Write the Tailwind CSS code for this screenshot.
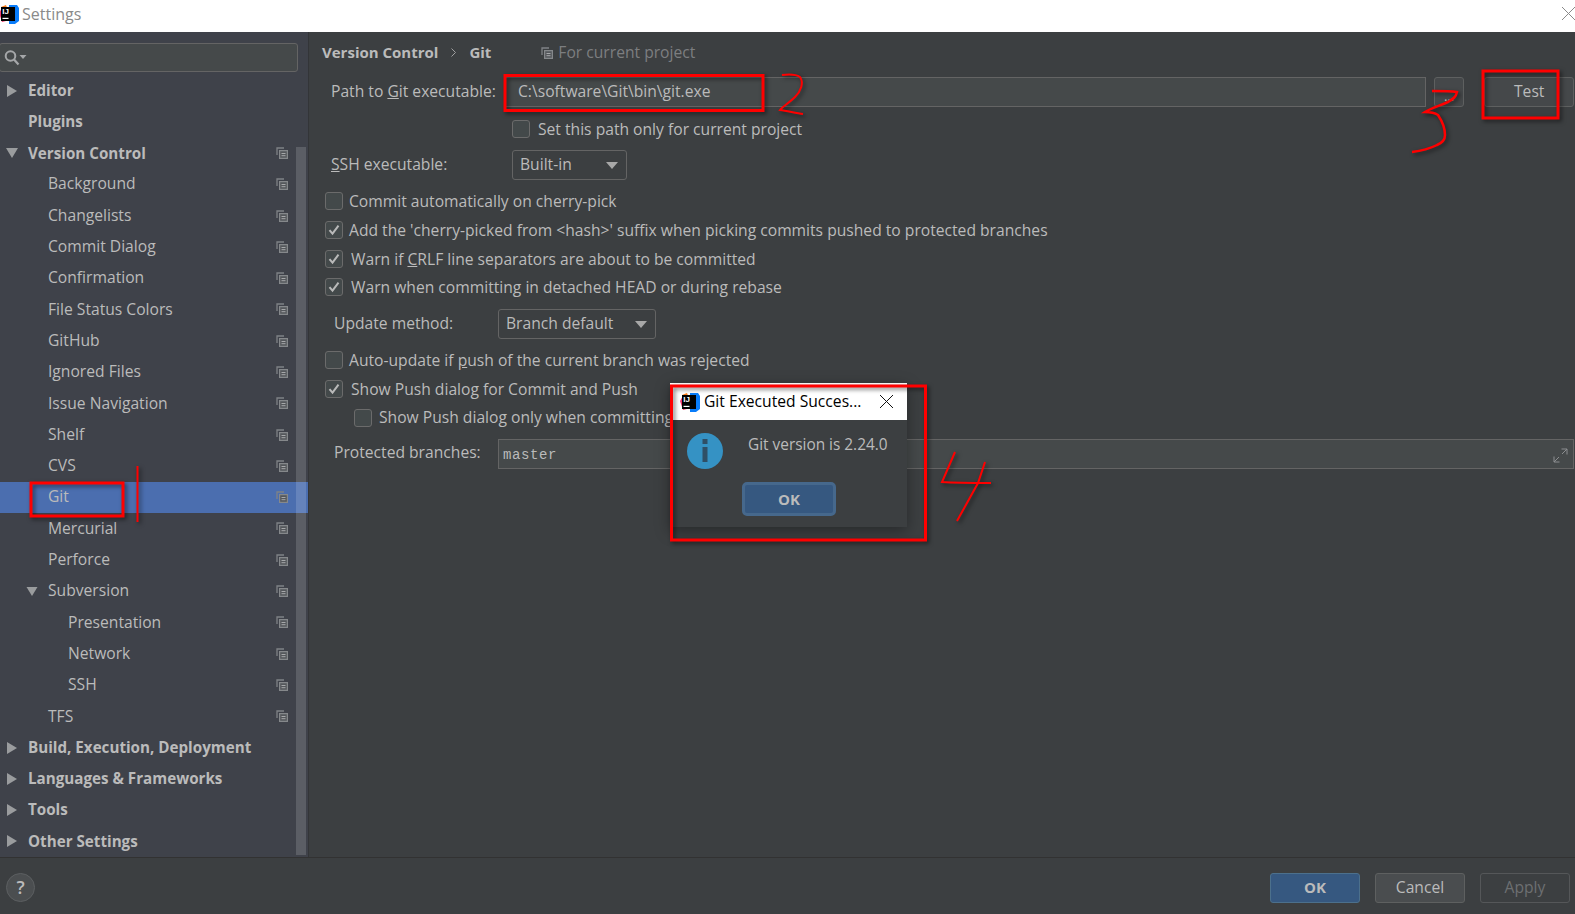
<!DOCTYPE html>
<html lang="en">
<head>
  <meta charset="UTF-8">
  <title>Settings</title>
  <script src="https://cdn.jsdelivr.net/npm/@tailwindcss/browser@4"></script>
</head>
<body class="relative w-[1575px] h-[914px] overflow-hidden bg-[#3c3f41] text-[#bbbbbb] font-['Open_Sans',sans-serif] text-[15.65px]">
  <!-- Shared icons -->
  <svg class="hidden">
    <symbol id="copy" viewBox="0 0 12 12">
      <path d="M8 1H1v7" fill="none" stroke="#7f8286" stroke-width="1.3"/>
      <path d="M3.6 3.6h7.8v7.8H3.6z" fill="#55585c" stroke="#85888b" stroke-width="1.2"/>
      <path d="M5.5 6.5h4M5.5 8.7h4" stroke="#a6a8aa" stroke-width="1"/>
    </symbol>
    <symbol id="right" viewBox="0 0 12 12"><path d="M1 0l10 6-10 6z" fill="#9a9c9e"/></symbol>
    <symbol id="down" viewBox="0 0 12 12"><path d="M0 1h12l-6 10z" fill="#9a9c9e"/></symbol>
    <symbol id="check" viewBox="0 0 18 18">
      <rect x=".5" y=".5" width="17" height="17" rx="2.5" fill="#43494a" stroke="#6b6b6b"/>
      <path d="M4.5 9.2l3 3.4 6-8" fill="none" stroke="#b9b9b9" stroke-width="2"/>
    </symbol>
    <symbol id="logo" viewBox="0 0 20 20">
      <path d="M0 9l3-5 4 2v11l-4 1z" fill="#f0386b"/>
      <path d="M10 1l8 0 2 3v13l-4 3h-6z" fill="#087cfa"/>
      <path d="M2 3l5-2 2 5-5 2z" fill="#fc801d"/>
      <rect x="2" y="3" width="14" height="14" fill="#000"/>
      <text x="3.3" y="10.2" font-size="8" font-weight="700" fill="#fff" font-family="Liberation Sans, sans-serif">IJ</text>
      <rect x="3.5" y="13.8" width="6" height="1.2" fill="#fff"/>
    </symbol>
  </svg>

  <!-- Title bar -->
  <header class="h-8 bg-white flex items-center justify-between">
    <div class="flex items-center gap-[3px] pb-[5px] -ml-[1px]">
      <svg class="w-[20px] h-[22px]"><use href="#logo"/></svg>
      <span class="text-[#8a8a8a] text-[16px]">Settings</span>
    </div>
    <svg class="w-[13px] h-[13px] mb-[5px]" viewBox="0 0 13 13"><path d="M0 0l13 13M13 0L0 13" stroke="#8a8a8a" fill="none"/></svg>
  </header>

  <div class="flex h-[826px] border-b border-[#323232]">
    <!-- Sidebar -->
    <aside class="relative w-[309px] shrink-0 bg-[#3f424a] border-r border-[#333538] pt-[11px]">
      <div class="h-[29px] w-[299px] -ml-[1px] flex items-center pl-[3px] bg-[#45494a] border border-[#646464] rounded-[3px]">
        <svg class="w-[25px] h-[17px]" viewBox="0 0 24 17">
          <circle cx="7" cy="7" r="4.8" fill="none" stroke="#a5a7a9" stroke-width="2"/>
          <path d="M10.5 10.5l4.5 5" stroke="#a5a7a9" stroke-width="2.2"/>
          <path d="M16 6h7l-3.5 4z" fill="#a5a7a9"/>
        </svg>
      </div>
      <nav class="mt-[3px]">
        <div class="h-[31.2px] flex items-center font-bold text-[15.2px]"><svg class="w-[12px] h-[12px] ml-[6px] mr-[10px]"><use href="#right"/></svg>Editor</div>
        <div class="h-[31.2px] flex items-center font-bold text-[15.2px] pl-[28px]">Plugins</div>
        <div class="h-[31.2px] flex items-center font-bold text-[15.2px] pr-[20px]"><svg class="w-[14px] h-[12px] ml-[5px] mr-[9px]"><use href="#down"/></svg>Version Control<svg class="w-[12px] h-[12px] ml-auto"><use href="#copy"/></svg></div>
        <div class="h-[31.3px] flex items-center pl-[48px] pr-[20px]">Background<svg class="w-[12px] h-[12px] ml-auto"><use href="#copy"/></svg></div>
        <div class="h-[31.3px] flex items-center pl-[48px] pr-[20px]">Changelists<svg class="w-[12px] h-[12px] ml-auto"><use href="#copy"/></svg></div>
        <div class="h-[31.3px] flex items-center pl-[48px] pr-[20px]">Commit Dialog<svg class="w-[12px] h-[12px] ml-auto"><use href="#copy"/></svg></div>
        <div class="h-[31.3px] flex items-center pl-[48px] pr-[20px]">Confirmation<svg class="w-[12px] h-[12px] ml-auto"><use href="#copy"/></svg></div>
        <div class="h-[31.3px] flex items-center pl-[48px] pr-[20px]">File Status Colors<svg class="w-[12px] h-[12px] ml-auto"><use href="#copy"/></svg></div>
        <div class="h-[31.3px] flex items-center pl-[48px] pr-[20px]">GitHub<svg class="w-[12px] h-[12px] ml-auto"><use href="#copy"/></svg></div>
        <div class="h-[31.3px] flex items-center pl-[48px] pr-[20px]">Ignored Files<svg class="w-[12px] h-[12px] ml-auto"><use href="#copy"/></svg></div>
        <div class="h-[31.3px] flex items-center pl-[48px] pr-[20px]">Issue Navigation<svg class="w-[12px] h-[12px] ml-auto"><use href="#copy"/></svg></div>
        <div class="h-[31.3px] flex items-center pl-[48px] pr-[20px]">Shelf<svg class="w-[12px] h-[12px] ml-auto"><use href="#copy"/></svg></div>
        <div class="h-[31.3px] flex items-center pl-[48px] pr-[20px]">CVS<svg class="w-[12px] h-[12px] ml-auto"><use href="#copy"/></svg></div>
        <div class="h-[31.3px] flex items-center pl-[48px] pr-[20px] bg-[#4b6eaf]">Git<svg class="w-[12px] h-[12px] ml-auto"><use href="#copy"/></svg></div>
        <div class="h-[31.3px] flex items-center pl-[48px] pr-[20px]">Mercurial<svg class="w-[12px] h-[12px] ml-auto"><use href="#copy"/></svg></div>
        <div class="h-[31.3px] flex items-center pl-[48px] pr-[20px]">Perforce<svg class="w-[12px] h-[12px] ml-auto"><use href="#copy"/></svg></div>
        <div class="h-[31.3px] flex items-center pr-[20px]"><svg class="w-[12px] h-[11px] ml-[26px] mr-[10px]"><use href="#down"/></svg>Subversion<svg class="w-[12px] h-[12px] ml-auto"><use href="#copy"/></svg></div>
        <div class="h-[31.3px] flex items-center pl-[68px] pr-[20px]">Presentation<svg class="w-[12px] h-[12px] ml-auto"><use href="#copy"/></svg></div>
        <div class="h-[31.3px] flex items-center pl-[68px] pr-[20px]">Network<svg class="w-[12px] h-[12px] ml-auto"><use href="#copy"/></svg></div>
        <div class="h-[31.3px] flex items-center pl-[68px] pr-[20px]">SSH<svg class="w-[12px] h-[12px] ml-auto"><use href="#copy"/></svg></div>
        <div class="h-[31.3px] flex items-center pl-[48px] pr-[20px]">TFS<svg class="w-[12px] h-[12px] ml-auto"><use href="#copy"/></svg></div>
        <div class="h-[31.2px] flex items-center font-bold text-[15.2px]"><svg class="w-[12px] h-[12px] ml-[6px] mr-[10px]"><use href="#right"/></svg>Build, Execution, Deployment</div>
        <div class="h-[31.2px] flex items-center font-bold text-[15.2px]"><svg class="w-[12px] h-[12px] ml-[6px] mr-[10px]"><use href="#right"/></svg>Languages &amp; Frameworks</div>
        <div class="h-[31.2px] flex items-center font-bold text-[15.2px]"><svg class="w-[12px] h-[12px] ml-[6px] mr-[10px]"><use href="#right"/></svg>Tools</div>
        <div class="h-[31.2px] flex items-center font-bold text-[15.2px]"><svg class="w-[12px] h-[12px] ml-[6px] mr-[10px]"><use href="#right"/></svg>Other Settings</div>
      </nav>
      <!-- Scrollbar -->
      <div class="absolute left-[296px] top-[115px] bottom-[2px] w-[10px] bg-white/15"></div>
    </aside>

    <!-- Git settings -->
    <main class="flex-1 pl-[13px] pr-[2px]">
      <div class="h-[37px] flex items-center pt-[4px] text-[15px]">
        <span class="font-bold">Version Control</span>
        <svg class="w-[5px] h-[9px] mx-[13px]" viewBox="0 0 5 9"><path d="M.5.5l4 4-4 4" fill="none" stroke="#a0a0a0"/></svg>
        <span class="font-bold">Git</span>
        <svg class="w-[12px] h-[12px] ml-[50px] mr-[5px]"><use href="#copy"/></svg>
        <span class="text-[#7c7e80] text-[15.65px]">For current project</span>
      </div>

      <div class="h-[30px] mt-[8px] flex items-center pl-[9px]">
        <span class="w-[173px]">Path to <u>G</u>it executable:</span>
        <div class="w-[922px] h-[30px] flex items-center pl-[13px] bg-[#45494a] border border-[#646464]">C:\software\Git\bin\git.exe</div>
        <div class="w-[30px] h-[30px] ml-[8px] flex items-end justify-center pb-[3px] leading-none text-[13px] border border-[#5e6060] bg-[#45484a] rounded-[3px]">...</div>
        <div class="w-[90px] h-[30px] ml-[20px] pl-[29px] flex items-center border border-[#5e6060] bg-[#45484a] rounded-[3px]">Test</div>
      </div>

      <div class="h-[18px] mt-[14px] flex items-center pl-[190px] gap-[8px]">
        <span class="w-[18px] h-[18px] -mt-[2px] bg-[#43494a] border border-[#6b6b6b] rounded-[3px]"></span>Set this path only for current project
      </div>

      <div class="h-[30px] mt-[11px] flex items-center pl-[9px]">
        <span class="w-[181px]"><u>S</u>SH executable:</span>
        <div class="w-[115px] h-[30px] flex items-center justify-between pl-[7px] pr-[8px] border border-[#646464] rounded-[3px]">Built-in<svg class="w-[12px] h-[7px]" viewBox="0 0 12 7"><path d="M0 0h12L6 7z" fill="#a8a8a8"/></svg></div>
      </div>

      <div class="h-[18px] mt-[13px] flex items-center pl-[3px] gap-[6px]">
        <span class="w-[18px] h-[18px] -mt-[2px] bg-[#43494a] border border-[#6b6b6b] rounded-[3px]"></span>Commit automatically on cherry-pick
      </div>
      <div class="h-[18px] mt-[11px] flex items-center pl-[3px] gap-[6px]">
        <svg class="w-[18px] h-[18px] -mt-[2px]"><use href="#check"/></svg>Add the 'cherry-picked from &lt;hash&gt;' suffix when picking commits pushed to protected branches
      </div>
      <div class="h-[18px] mt-[11px] flex items-center pl-[3px] gap-[8px]">
        <svg class="w-[18px] h-[18px] -mt-[2px]"><use href="#check"/></svg><span>Warn if <u>C</u>RLF line separators are about to be committed</span>
      </div>
      <div class="h-[18px] mt-[10px] flex items-center pl-[3px] gap-[8px]">
        <svg class="w-[18px] h-[18px] -mt-[2px]"><use href="#check"/></svg>Warn when committing in detached HEAD or during rebase
      </div>

      <div class="h-[30px] mt-[12px] flex items-center pl-[12px]">
        <span class="w-[164px]">Update method:</span>
        <div class="w-[158px] h-[30px] flex items-center justify-between pl-[7px] pr-[8px] border border-[#646464] rounded-[3px]">Branch default<svg class="w-[12px] h-[7px]" viewBox="0 0 12 7"><path d="M0 0h12L6 7z" fill="#a8a8a8"/></svg></div>
      </div>

      <div class="h-[18px] mt-[13px] flex items-center pl-[3px] gap-[6px]">
        <span class="w-[18px] h-[18px] -mt-[2px] bg-[#43494a] border border-[#6b6b6b] rounded-[3px]"></span><span>Auto-update if <u>p</u>ush of the current branch was rejected</span>
      </div>
      <div class="h-[18px] mt-[11px] flex items-center pl-[3px] gap-[8px]">
        <svg class="w-[18px] h-[18px] -mt-[2px]"><use href="#check"/></svg>Show Push dialog for Commit and Push
      </div>
      <div class="h-[18px] mt-[10px] flex items-center pl-[32px] gap-[7px]">
        <span class="w-[18px] h-[18px] bg-[#43494a] border border-[#6b6b6b] rounded-[3px]"></span>Show Push dialog only when committing
      </div>

      <div class="h-[30px] mt-[12px] flex items-center pl-[12px]">
        <span class="w-[164px] -mt-[2px]">Protected branches:</span>
        <div class="flex-1 h-[30px] flex items-center justify-between pl-[4px] pr-[5px] pt-[2px] bg-[#45494a] border border-[#646464] font-['Liberation_Mono',monospace] text-[14px] tracking-[0.6px]">master
          <svg class="w-[15px] h-[15px]" viewBox="0 0 15 15"><path d="M8.5 1h5.5v5.5M14 1L9 6M6.5 14H1V8.5M1 14l5-5" fill="none" stroke="#8c8e90"/></svg>
        </div>
      </div>
    </main>
  </div>

  <!-- Footer -->
  <footer class="h-[56px] flex items-center pl-[6px] pr-[5px] pt-[3px]">
    <div class="w-[29px] h-[29px] rounded-full bg-[#4b4e50] border border-[#5c5f61] flex items-center justify-center font-semibold text-[18px]">?</div>
    <div class="ml-auto w-[90px] h-[30px] flex items-center justify-center font-bold text-[15px] bg-[#365880] border border-[#4c708c] rounded-[3px]">OK</div>
    <div class="ml-[15px] w-[90px] h-[30px] flex items-center justify-center bg-[#4a4d4f] border border-[#5e6060] rounded-[3px]">Cancel</div>
    <div class="ml-[15px] w-[90px] h-[30px] flex items-center justify-center text-[#6d6f71] border border-[#555759] rounded-[3px]">Apply</div>
  </footer>

  <!-- Test result dialog -->
  <div class="absolute left-[670px] top-[383px] w-[237px] h-[144px] bg-[#3c3f41] shadow-[0_4px_14px_rgba(0,0,0,0.35)]">
    <div class="h-[37px] bg-white flex items-center pl-[10px] text-black">
      <svg class="w-[20px] h-[20px] mr-[4px]"><use href="#logo"/></svg>
      <span>Git Executed Succes...</span>
      <svg class="w-[13px] h-[13px] ml-auto mr-[14px]" viewBox="0 0 13 13"><path d="M0 0l13 13M13 0L0 13" stroke="#111" fill="none"/></svg>
    </div>
    <div class="flex pl-[17px] pt-[13px]">
      <svg class="w-[36px] h-[36px] shrink-0" viewBox="0 0 36 36">
        <circle cx="18" cy="18" r="18" fill="#3592c4"/>
        <rect x="15.5" y="6" width="5" height="5" fill="#2f4f66"/>
        <rect x="15.5" y="14" width="5" height="15" fill="#2f4f66"/>
      </svg>
      <span class="ml-[25px] leading-[24px] text-[15.4px]">Git version is 2.24.0</span>
    </div>
    <div class="ml-[72px] mt-[13px] w-[94px] h-[34px] flex items-center justify-center font-bold text-[15px] bg-[#365880] border-[3px] border-[#46688c] rounded-[5px]">OK</div>
  </div>

  <!-- Red hand-drawn annotations -->
  <svg class="absolute inset-0 w-[1575px] h-[914px] pointer-events-none drop-shadow-[2px_2px_2px_rgba(0,0,0,0.55)]" viewBox="0 0 1575 914" fill="none" stroke="#ff0000">
    <rect x="31" y="483" width="92" height="33" stroke-width="3"/>
    <path d="M137.5 466v56" stroke-width="2"/>
    <rect x="505" y="75.5" width="258" height="35" stroke-width="3"/>
    <path d="M782 75c8-1 15 0 18 2 4 6 1 14-5 20-6 6-13 10-15 13 7 1 16 3 23 4" stroke-width="2"/>
    <rect x="1483" y="71" width="75" height="47" stroke-width="3"/>
    <path d="M1432 91c9 0 18 0 25 1-1 5-4 7-9 10-9 4-17 6-23 10 5 0 10 1 13 3 4 6 7 13 7 20 0 5-3 8-8 10-8 4-17 6-25 7" stroke-width="2.5"/>
    <rect x="671.5" y="386" width="254" height="154" stroke-width="3"/>
    <path d="M955 452l-13 30c15 1 33 1 49 1M985 462l-7 21-21 38" stroke-width="2"/>
  </svg>
</body>
</html>
